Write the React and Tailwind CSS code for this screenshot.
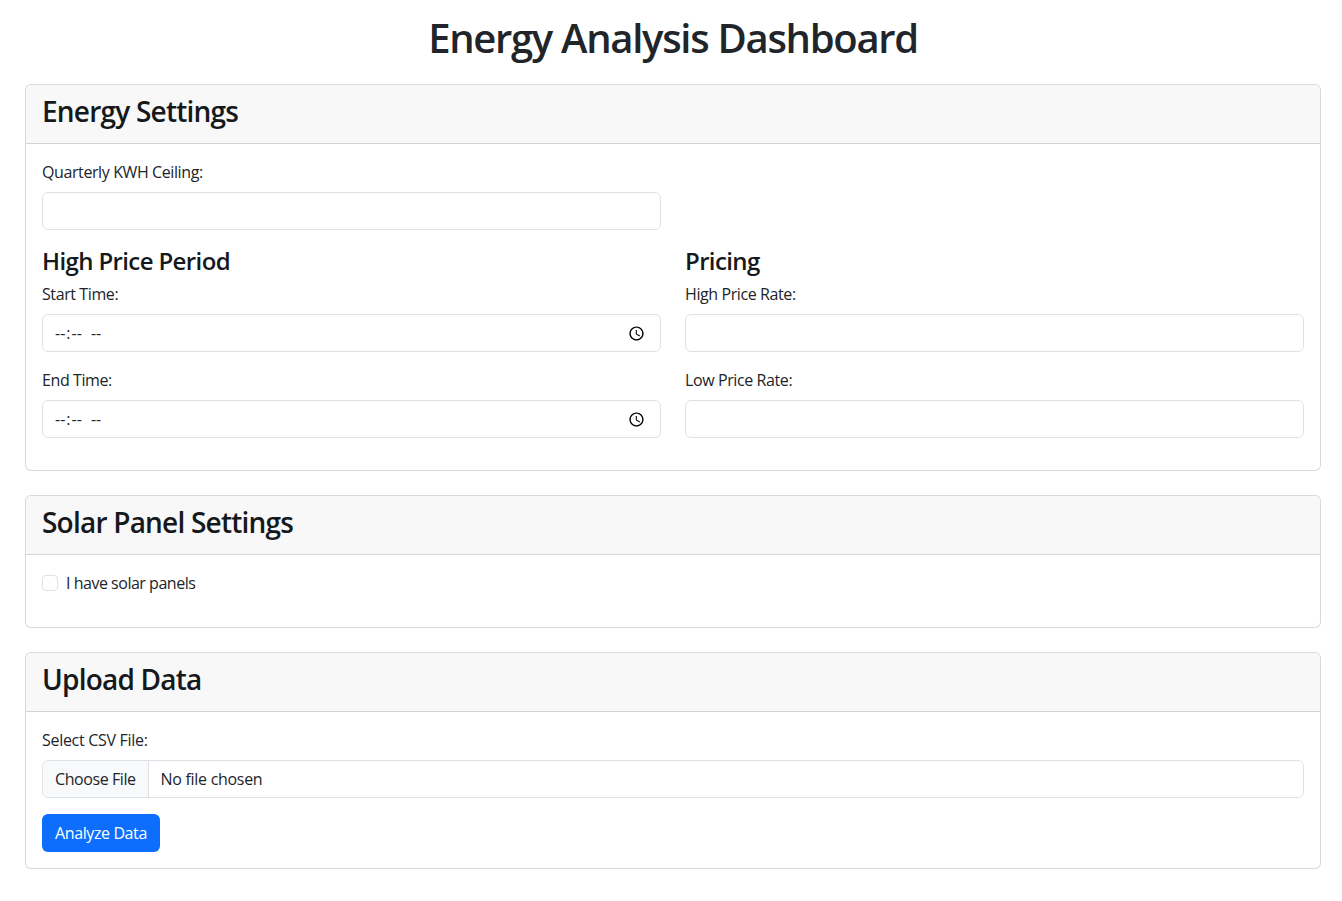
const inputClass =
  "block h-[38px] w-full rounded-md border border-[#dee2e6] bg-white px-3 py-1.5 text-base leading-6 text-[#212529] outline-none";

const timeClass = "[&::-webkit-datetime-edit-ampm-field]:ml-[5px] [&::-webkit-datetime-edit]:-ml-px";

function Card({ title, children }) {
  return (
    <section className="mb-6 overflow-hidden rounded-md border border-black/15 bg-white">
      <div className="h-[58.6px] border-b border-black/15 bg-[#f8f8f8] px-4 pt-2.5">
        <h3 className="text-[28px] leading-[33.6px] font-semibold tracking-[-0.78px] text-[#16191c]">{title}</h3>
      </div>
      <div className="p-4">{children}</div>
    </section>
  );
}

function Field({ label, type = "number" }) {
  return (
    <div className="mb-4">
      <label className="mb-2 block text-base leading-6 tracking-[-0.4px]">{label}</label>
      <input className={`${inputClass} ${type === "time" ? timeClass : ""}`} type={type} />
    </div>
  );
}

export default function App() {
  return (
    <main className="min-h-[901px] bg-white pr-[21px] pl-[25px] font-['Open_Sans','Noto_Sans',sans-serif] text-[#212529]">
      <h1 className="pt-[14px] pb-[22px] text-center text-[40px] leading-[48px] font-semibold tracking-[-1.3px]">
        Energy Analysis Dashboard
      </h1>

      <Card title="Energy Settings">
        <div className="grid grid-cols-2 gap-x-6">
          <Field label="Quarterly KWH Ceiling:" />
          <div />
          <div>
            <h4 className="mb-2 pt-px text-2xl leading-[27.8px] font-semibold tracking-[-0.62px] text-[#16191c]">High Price Period</h4>
            <Field label="Start Time:" type="time" />
            <Field label="End Time:" type="time" />
          </div>
          <div>
            <h4 className="mb-2 pt-px text-2xl leading-[27.8px] font-semibold tracking-[-0.62px] text-[#16191c]">Pricing</h4>
            <Field label="High Price Rate:" />
            <Field label="Low Price Rate:" />
          </div>
        </div>
      </Card>

      <Card title="Solar Panel Settings">
        <div className="mb-4 flex h-6 items-center gap-2">
          <input type="checkbox" className="size-4 appearance-none rounded border border-[#dee2e6] bg-white" />
          <label className="text-base leading-6 tracking-[-0.48px]">I have solar panels</label>
        </div>
      </Card>

      <Card title="Upload Data">
        <div className="mb-4">
          <label className="mb-2 block text-base leading-6 tracking-[-0.3px]">Select CSV File:</label>
          <input
            type="file"
            className="block h-[38px] w-full overflow-hidden rounded-md border border-[#dee2e6] bg-white text-base leading-6 tracking-[-0.3px] text-[#212529] file:mr-3 file:h-[36px] file:border-0 file:border-r file:border-solid file:border-[#dee2e6] file:bg-[#f8f9fa] file:px-3 file:text-base file:tracking-[-0.42px] file:text-[#212529]"
          />
        </div>
        <button className="h-[38px] w-[118px] rounded-md bg-[#0d6efd] text-base leading-6 tracking-[-0.4px] text-white">
          Analyze Data
        </button>
      </Card>
    </main>
  );
}
